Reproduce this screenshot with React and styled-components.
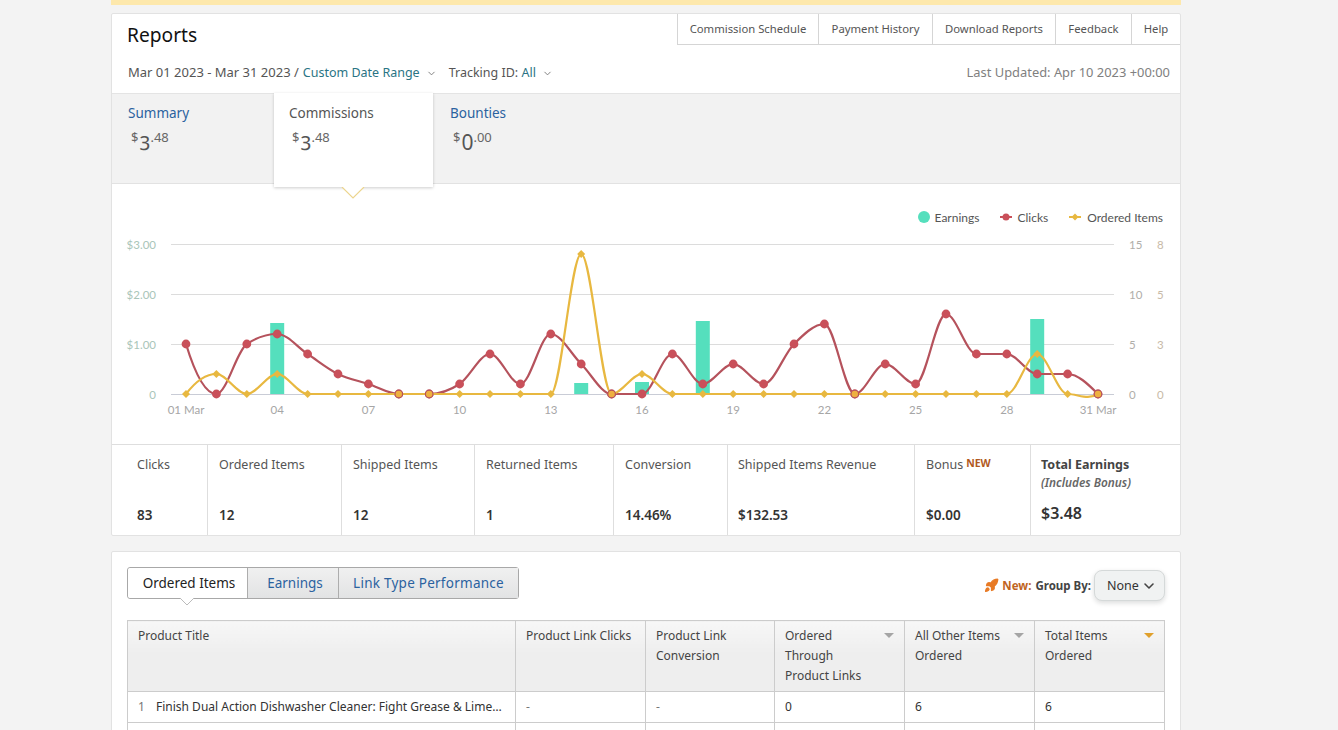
import React from 'react';
import styled, { createGlobalStyle } from 'styled-components';
import { Rocket, ChevronDown } from 'lucide-react';

const Global = createGlobalStyle`
  html, body { margin: 0; padding: 0; height: 730px; overflow: hidden; background: #f3f3f3; }
  body { font-family: "Noto Sans", "Liberation Sans", Arial, sans-serif; color: #333; }
  * { box-sizing: border-box; }
`;

const Page = styled.div`width: 1070px; margin-left: 111px; height: 730px; overflow: hidden;`;
const Banner = styled.div`height: 5px; background: #fde8ac; margin-bottom: 8px;`;
const Panel = styled.section`background: #fff; border: 1px solid #e2e2e2; border-radius: 2px;`;
const Header = styled.header`height: 79px; display: flex; flex-direction: column; position: relative;`;
const TopRow = styled.div`display: flex; justify-content: space-between; align-items: flex-start; height: 44px;`;
const Title = styled.h1`margin: 7px 0 0 15px; font-size: 19.2px; font-weight: 400; line-height: 28px; color: #111;`;
const TopLinks = styled.nav`display: flex; height: 31px; border-left: 1px solid #d5d5d5; border-bottom: 1px solid #d5d5d5;`;
const TopLink = styled.a`
  width: ${p => p.$w}px; display: flex; align-items: center; justify-content: center; padding-bottom: 2px;
  font-size: 11.3px; color: #555; white-space: nowrap; border-left: ${p => (p.$first ? 'none' : '1px solid #d5d5d5')};
`;
const FilterRow = styled.div`display: flex; align-items: center; padding: 0 10px 0 16px; font-size: 12.5px; color: #555; height: 24px; margin-top: 2px;`;
const DateText = styled.span`font-size: 13px; margin-right: 4px;`;
const Teal = styled.span`color: #2a7484;`;
const Chev = styled(ChevronDown)`margin: 3px 12px 0 6px; color: #777;`;
const Updated = styled.span`margin-left: auto; color: #808080; font-size: 12.9px;`;

const TabBand = styled.div`display: flex; height: 91px; background: #f2f2f2; border-top: 1px solid #e4e4e4; border-bottom: 1px solid #e2e2e2;`;
const Tab = styled.div`
  width: ${p => p.$w}px; padding: 10px 0 0 ${p => p.$pad}px; flex: none; position: relative;
  ${p => p.$active && `
    background: #fff; height: 94px; margin-top: -1px; box-shadow: 0 1px 3px rgba(0,0,0,.2); z-index: 2; padding-top: 11px;
  `}
`;
const TabName = styled.div`font-size: 13.5px; line-height: 18px; color: ${p => (p.$active ? '#555' : '#2b629f')};`;
const Money = styled.div`margin: 5px 0 0 3px; display: flex; align-items: flex-start; color: #555; line-height: 1; height: 28px;`;
const Sup = styled.span`font-size: 13px; margin-top: 4px; color: #666;`;
const Whole = styled.span`
  font-size: ${p => (p.$old ? 20 : 21)}px; margin-top: ${p => (p.$old ? 3 : 5)}px; margin-left: 1px;
  font-feature-settings: ${p => (p.$old ? '"onum"' : 'normal')};
`;
const TabCaret = styled.svg`position: absolute; left: 67px; top: 94px; display: block;`;

const ChartArea = styled.div`height: 260px; padding-top: 25px; position: relative;`;
const Legend = styled.div`display: flex; justify-content: flex-end; align-items: center; height: 16px; padding-right: 17px; font-family: Lato, "Noto Sans", sans-serif; font-size: 12px; color: #555; gap: 21px;`;
const LegendItem = styled.span`display: flex; align-items: center; gap: ${p => p.$gap}px;`;
const Swatch = styled.i`width: 12px; height: 12px; border-radius: 50%; background: #55dfbd; display: block;`;
const ChartSvg = styled.svg`display: block; margin-top: 9px; font-family: Lato, "Noto Sans", sans-serif;`;

const Stats = styled.div`display: flex; height: 91px; border-top: 1px solid #dedede;`;
const Stat = styled.div`
  width: ${p => p.$w}px; flex: none; padding: 12px 0 0 ${p => p.$pad || 11}px; position: relative;
  border-left: ${p => (p.$first ? 'none' : '1px solid #dedede')};
`;
const StatLabel = styled.div`font-size: 12.5px; line-height: 16px; color: #555; white-space: nowrap;`;
const NewTag = styled.span`font-size: 10.5px; font-weight: 700; color: #b1591d; margin-left: 3px; position: relative; top: -2px;`;
const StatValue = styled.div`position: absolute; bottom: 11px; left: ${p => p.$pad || 11}px; font-size: 13.5px; font-weight: 600; color: #333; line-height: 18px;`;
const TotalName = styled.div`font-size: 12.5px; font-weight: 700; line-height: 16px; color: #444;`;
const TotalNote = styled.div`font-size: 11.8px; font-style: italic; font-weight: 600; color: #666; line-height: 19px;`;
const TotalValue = styled(StatValue)`font-size: 16px; bottom: 13px;`;

const Panel2 = styled(Panel)`margin-top: 15px; padding: 15px 15px 0; height: 200px;`;
const ControlRow = styled.div`display: flex; justify-content: space-between; align-items: flex-start; height: 53px;`;
const Seg = styled.div`display: flex; height: 32px; border: 1px solid #a8a8a8; border-radius: 3px; position: relative;`;
const SegBtn = styled.div`
  width: ${p => p.$w}px; display: flex; align-items: center; justify-content: center; font-size: 13.5px;
  padding-left: ${p => p.$shift || 0}px; letter-spacing: ${p => p.$track || 0}px;
  color: ${p => (p.$active ? '#222' : '#2b629f')}; white-space: nowrap;
  background: ${p => (p.$active ? '#fff' : 'linear-gradient(#f0f0f0,#e2e3e4)')};
  border-left: ${p => (p.$first ? 'none' : '1px solid #adadad')};
  position: relative; border-radius: ${p => (p.$first ? '3px 0 0 3px' : '0')};
`;
const SegCaret = styled.svg`position: absolute; left: 51px; top: 30px; display: block;`;
const GroupBy = styled.div`display: flex; align-items: center; height: 31px; margin-top: 3px; font-size: 11.5px; font-weight: 700; color: #444;`;
const Orange = styled.span`color: #c0651f; margin: 0 4px 0 3px;`;
const RocketIcon = styled(Rocket)`color: #e87a24; fill: #e87a24;`;
const Select = styled.div`
  width: 71px; height: 31px; margin-left: 3px; display: flex; align-items: center; justify-content: space-between;
  padding: 0 7px 0 12px; border: 1px solid #d5d9d9; border-radius: 8px; background: #f0f2f2;
  box-shadow: 0 2px 5px rgba(15,17,17,.15); font-size: 12.5px; font-weight: 400; color: #333;
`;

const Table = styled.table`width: 1037px; border-collapse: collapse; table-layout: fixed; font-size: 12px; color: #333;`;
const Th = styled.th`
  width: ${p => p.$w}px; height: 71px; vertical-align: top; text-align: left; font-weight: 400; line-height: 20px;
  padding: 5px ${p => (p.$sort ? 31 : 6)}px 0 10px; border: 1px solid #ccc; background: linear-gradient(#f7f7f7, #eee 45%); color: #444; position: relative;
`;
const Td = styled.td`height: 31px; padding: 0 10px 2px; border: 1px solid #ccc; color: ${p => (p.$dim ? '#777' : '#333')}; white-space: nowrap; overflow: hidden;`;
const TitleCell = styled.div`display: flex; gap: 11px; overflow: hidden;`;
const RowNum = styled.span`color: #777; flex: none; width: 7px;`;
const SortMark = styled.i`
  position: absolute; right: 10px; top: 12px; width: 0; height: 0;
  border-left: 5px solid transparent; border-right: 5px solid transparent;
  border-top: 5px solid ${p => (p.$on ? '#e0a02c' : '#a5a5a5')};
`;

const clicks = [5,0,5,6,4,2,1,0,0,1,4,1,6,3,0,0,4,1,3,1,5,7,0,3,1,8,4,4,2,2,0];
const ordered = [0,1,0,1,0,0,0,0,0,0,0,0,0,7,0,1,0,0,0,0,0,0,0,0,0,0,0,0,2,0,0];
const bars = [[4,323],[14,383],[16,382],[18,321],[29,319]];
const OX = 112, OY = 234;
const px = d => 186 + (d - 1) * 30.4 - OX;
const base = 394 - OY;

function monotone(pts) {
  const h = pts[1][0] - pts[0][0];
  const s = pts.slice(1).map((p, i) => (p[1] - pts[i][1]) / h);
  const m = pts.map((_, i) => {
    if (i === 0) return (3 * s[0] - s[1]) / 2;
    if (i === pts.length - 1) return (3 * s[i - 1] - s[i - 2]) / 2;
    const a = s[i - 1], b = s[i];
    return (Math.sign(a) + Math.sign(b)) * Math.min(Math.abs(a), Math.abs(b), 0.5 * Math.abs((a + b) / 2)) || 0;
  });
  let d = `M${pts[0][0]},${pts[0][1]}`;
  for (let i = 1; i < pts.length; i++) {
    const [x0, y0] = pts[i - 1], [x1, y1] = pts[i];
    d += `C${x0 + h / 3},${y0 + (h / 3) * m[i - 1]} ${x1 - h / 3},${y1 - (h / 3) * m[i]} ${x1},${y1}`;
  }
  return d;
}
const clickPts = clicks.map((v, i) => [px(i + 1), base - v * 10]);
const orderPts = ordered.map((v, i) => [px(i + 1), base - v * 20]);

function Chart() {
  const gridY = [244, 294, 344];
  const xTicks = [[1,'01 Mar'],[4,'04'],[7,'07'],[10,'10'],[13,'13'],[16,'16'],[19,'19'],[22,'22'],[25,'25'],[28,'28'],[31,'31 Mar']];
  const axis = [['$3.00','15','8',244],['$2.00','10','5',294],['$1.00','5','3',344],['0','0','0',394]];
  return (
    <ChartSvg width="1068" height="210" viewBox="0 0 1068 210">
      {gridY.map(y => <line key={y} x1={171 - OX} x2={1114 - OX} y1={y - OY + .5} y2={y - OY + .5} stroke="#dcdcdc" />)}
      <line x1={171 - OX} x2={1114 - OX} y1={base + .5} y2={base + .5} stroke="#c9ccd6" />
      {axis.map(([a, b, c, y]) => (
        <g key={y} fontSize="11.5">
          <text x={156 - OX} y={y - OY + 5} textAnchor="end" fill="#a9c5b9">{a}</text>
          <text x={1129 - OX} y={y - OY + 5} fill="#b0aeaa">{b}</text>
          <text x={1157 - OX} y={y - OY + 5} fill="#c8baa8">{c}</text>
        </g>
      ))}
      {xTicks.map(([d, t]) => <text key={d} x={px(d)} y={180} textAnchor="middle" fontSize="11.5" fill="#a6a6a6">{t}</text>)}
      {bars.map(([d, top]) => <rect key={d} x={px(d) - 7} y={top - OY} width="14" height={394 - top} fill="#55dfbd" />)}
      <path d={monotone(clickPts)} fill="none" stroke="#b5525c" strokeWidth="2.2" />
      {clickPts.map(([x, y], i) => <circle key={i} cx={x} cy={y} r="4.4" fill="#c9505a" />)}
      <path d={monotone(orderPts)} fill="none" stroke="#e8b840" strokeWidth="2.2" />
      {orderPts.map(([x, y], i) => (
        clicks[i] === 0 && ordered[i] === 0
          ? <circle key={i} cx={x} cy={y} r="3.8" fill="#eeb040" stroke="#b5525c" strokeWidth="1.2" />
          : <path key={i} d={`M${x},${y - 4}L${x + 4},${y}L${x},${y + 4}L${x - 4},${y}Z`} fill="#e8b840" />
      ))}
    </ChartSvg>
  );
}

const LegendClick = () => (
  <svg width="12" height="8" viewBox="0 0 12 8"><line x1="0" x2="12" y1="4" y2="4" stroke="#c9505a" strokeWidth="2" /><circle cx="6" cy="4" r="3.5" fill="#c9505a" /></svg>
);
const LegendOrder = () => (
  <svg width="12" height="8" viewBox="0 0 12 8"><line x1="0" x2="12" y1="4" y2="4" stroke="#e8b840" strokeWidth="2" /><path d="M6 .5L9.5 4L6 7.5L2.5 4Z" fill="#e8b840" /></svg>
);

const Amount = ({ whole, cents, old }) => (
  <Money><Sup>$</Sup><Whole $old={old}>{whole}</Whole><Sup>.{cents}</Sup></Money>
);

export default function App() {
  return (
    <Page>
      <Global />
      <Banner />
      <Panel>
        <Header>
          <TopRow>
            <Title>Reports</Title>
            <TopLinks>
              <TopLink $w={140} $first>Commission Schedule</TopLink>
              <TopLink $w={114}>Payment History</TopLink>
              <TopLink $w={123}>Download Reports</TopLink>
              <TopLink $w={76}>Feedback</TopLink>
              <TopLink $w={49}>Help</TopLink>
            </TopLinks>
          </TopRow>
          <FilterRow>
            <DateText>Mar 01 2023 - Mar 31 2023 /</DateText><Teal>Custom Date Range</Teal>
            <Chev size={11} />
            <span>Tracking ID:&nbsp;</span><Teal>All</Teal>
            <Chev size={11} />
            <Updated>Last Updated: Apr 10 2023 +00:00</Updated>
          </FilterRow>
        </Header>
        <TabBand>
          <Tab $w={162} $pad={16}><TabName>Summary</TabName><Amount old whole="3" cents="48" /></Tab>
          <Tab $w={159} $pad={15} $active>
            <TabName $active>Commissions</TabName><Amount old whole="3" cents="48" />
            <TabCaret width="24" height="12" viewBox="0 0 24 12"><path d="M1 0L12 11L23 0" fill="#fff" stroke="#ecd58e" strokeWidth="1.2" /></TabCaret>
          </Tab>
          <Tab $w={200} $pad={17}><TabName>Bounties</TabName><Amount whole="0" cents="00" /></Tab>
        </TabBand>
        <ChartArea>
          <Legend>
            <LegendItem $gap={5}><Swatch />Earnings</LegendItem>
            <LegendItem $gap={5}><LegendClick />Clicks</LegendItem>
            <LegendItem $gap={6}><LegendOrder />Ordered Items</LegendItem>
          </Legend>
          <Chart />
        </ChartArea>
        <Stats>
          <Stat $w={95} $first $pad={25}><StatLabel>Clicks</StatLabel><StatValue $pad={25}>83</StatValue></Stat>
          <Stat $w={134}><StatLabel>Ordered Items</StatLabel><StatValue>12</StatValue></Stat>
          <Stat $w={133}><StatLabel>Shipped Items</StatLabel><StatValue>12</StatValue></Stat>
          <Stat $w={139}><StatLabel>Returned Items</StatLabel><StatValue>1</StatValue></Stat>
          <Stat $w={114}><StatLabel>Conversion</StatLabel><StatValue>14.46%</StatValue></Stat>
          <Stat $w={187} $pad={10}><StatLabel>Shipped Items Revenue</StatLabel><StatValue $pad={10}>$132.53</StatValue></Stat>
          <Stat $w={116}><StatLabel>Bonus<NewTag>NEW</NewTag></StatLabel><StatValue>$0.00</StatValue></Stat>
          <Stat $w={150} $pad={10}>
            <TotalName>Total Earnings</TotalName>
            <TotalNote>(Includes Bonus)</TotalNote>
            <TotalValue $pad={10}>$3.48</TotalValue>
          </Stat>
        </Stats>
      </Panel>
      <Panel2>
        <ControlRow>
          <Seg>
            <SegBtn $w={119} $active $first $shift={3}>
              Ordered Items
              <SegCaret width="16" height="8" viewBox="0 0 16 8"><path d="M1 0L8 7L15 0" fill="#fff" stroke="#bbb" /></SegCaret>
            </SegBtn>
            <SegBtn $w={91} $shift={4}>Earnings</SegBtn>
            <SegBtn $w={180} $track={0.25}>Link Type Performance</SegBtn>
          </Seg>
          <GroupBy>
            <RocketIcon size={15} />
            <Orange>New:</Orange>
            Group By:
            <Select>None<ChevronDown size={16} strokeWidth={2.4} color="#444" /></Select>
          </GroupBy>
        </ControlRow>
        <Table>
          <thead>
            <tr>
              <Th $w={388}>Product Title</Th>
              <Th $w={130}>Product Link Clicks</Th>
              <Th $w={129}>Product Link Conversion</Th>
              <Th $w={130} $sort>Ordered Through Product Links<SortMark /></Th>
              <Th $w={130} $sort>All Other Items Ordered<SortMark /></Th>
              <Th $w={130} $sort>Total Items Ordered<SortMark $on /></Th>
            </tr>
          </thead>
          <tbody>
            <tr>
              <Td><TitleCell><RowNum>1</RowNum><span>Finish Dual Action Dishwasher Cleaner: Fight Grease &amp; Lime…</span></TitleCell></Td>
              <Td $dim>-</Td>
              <Td $dim>-</Td>
              <Td>0</Td>
              <Td>6</Td>
              <Td>6</Td>
            </tr>
            <tr><Td /><Td /><Td /><Td /><Td /><Td /></tr>
          </tbody>
        </Table>
      </Panel2>
    </Page>
  );
}
